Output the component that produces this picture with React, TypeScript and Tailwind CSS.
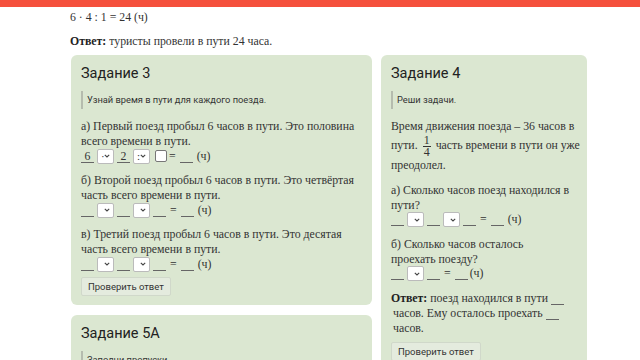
import React from 'react';

const serif = { fontFamily: '"Liberation Serif", "DejaVu Serif", serif' };

const Blank = ({ children, w = 'w-[13px]' }: { children?: React.ReactNode; w?: string }) => (
  <span className={`inline-block ${w} border-b border-[#666] text-center leading-[12px] align-baseline`}>
    {children ?? '\u00a0'}
  </span>
);

const Select = ({ value }: { value?: string }) => (
  <span className="inline-flex items-center justify-end w-[17px] h-[15px] mx-[3px] border border-[#bbb] bg-white rounded-[2px] align-middle relative">
    {value && <span className="absolute left-[3px] top-[-1px] text-[11px]">{value}</span>}
    <svg width="6" height="4" viewBox="0 0 6 4" className="mr-[3px]">
      <path d="M0.8 0.8 L3 3 L5.2 0.8" stroke="#444" strokeWidth="1.1" fill="none" />
    </svg>
  </span>
);

const Hint = ({ children }: { children: React.ReactNode }) => (
  <div className="border-l-2 border-[#b5bcae] pl-[4px] py-[4px] mt-[7px] text-[9.3px] leading-[10px] text-[#333] font-['Roboto',sans-serif]">
    {children}
  </div>
);

const Button = () => (
  <button className="mt-[6px] px-[6px] h-[19px] text-[9.5px] text-[#333] bg-[#e4ebde] border border-[#d0d8ca] rounded-[2px] font-['Roboto',sans-serif]">
    Проверить ответ
  </button>
);

const Card = ({ title, children }: { title: string; children: React.ReactNode }) => (
  <div className="bg-[#dbe7d1] rounded-[6px] px-[10px] pt-[9px] pb-[9px]">
    <h3 className="text-[14.5px] text-[#222] leading-[20px] font-['Roboto',sans-serif]">{title}</h3>
    {children}
  </div>
);

const Eq = ({ children }: { children: React.ReactNode }) => (
  <div className="flex items-center h-[14px]">{children}</div>
);

export default function App() {
  return (
    <div className="w-[640px] h-[360px] overflow-hidden bg-white text-[#333]" style={serif}>
      <div className="h-[7px] bg-[#f5503c]" />
      <div className="pl-[70px] pt-[3px] text-[11.8px] leading-[15px]">
        <p>6 · 4 : 1 = 24 (ч)</p>
        <p className="mt-[9px]"><b className="text-[#222]">Ответ:</b> туристы провели в пути 24 часа.</p>
      </div>
      <div className="flex gap-[9px] pl-[71px] mt-[6px] items-start text-[11.8px] leading-[15px]">
        <div className="w-[301px] flex flex-col gap-[10px]">
          <Card title="Задание 3">
            <Hint>Узнай время в пути для каждого поезда.</Hint>
            <p className="mt-[10px]">а) Первый поезд пробыл 6 часов в пути. Это половина всего времени в пути.</p>
            <Eq>
              <Blank>6</Blank><Select value="·" /><Blank>2</Blank><Select value=":" />
              <span className="inline-block w-[12px] h-[12px] border border-[#777] bg-white rounded-[2px] ml-[2px] mr-[2px]" />
              <span>=</span><span className="ml-[4px]"><Blank /></span><span className="ml-[4px]">(ч)</span>
            </Eq>
            <p className="mt-[10px]">б) Второй поезд пробыл 6 часов в пути. Это четвёртая часть всего времени в пути.</p>
            <Eq>
              <Blank /><Select /><Blank /><Select /><Blank /><span className="ml-[4px]">=</span><span className="ml-[4px]"><Blank /></span><span className="ml-[4px]">(ч)</span>
            </Eq>
            <p className="mt-[10px]">в) Третий поезд пробыл 6 часов в пути. Это десятая часть всего времени в пути.</p>
            <Eq>
              <Blank /><Select /><Blank /><Select /><Blank /><span className="ml-[4px]">=</span><span className="ml-[4px]"><Blank /></span><span className="ml-[4px]">(ч)</span>
            </Eq>
            <Button />
          </Card>
          <Card title="Задание 5А">
            <Hint>Заполни пропуски.</Hint>
            <p className="mt-[10px]">Ответ</p>
          </Card>
        </div>
        <div className="w-[206px]">
          <Card title="Задание 4">
            <Hint>Реши задачи.</Hint>
            <p className="mt-[10px]">Время движения поезда – 36 часов в</p>
            <p className="whitespace-nowrap leading-[24px] mt-[-1px]">
              пути.
              <span className="inline-flex flex-col items-center mx-[5px] text-[12px] leading-[11px] align-middle">
                <span className="px-[1px]">1</span>
                <span className="w-[8px] border-t border-[#333]" />
                <span>4</span>
              </span>
              часть времени в пути он уже
            </p>
            <p>преодолел.</p>
            <p className="mt-[10px]">а) Сколько часов поезд находился в пути?</p>
            <Eq>
              <Blank /><Select /><Blank /><Select /><Blank /><span className="ml-[4px]">=</span><span className="ml-[4px]"><Blank /></span><span className="ml-[4px]">(ч)</span>
            </Eq>
            <p className="mt-[10px]">б) Сколько часов осталось<br />проехать поезду?</p>
            <Eq>
              <Blank /><Select /><Blank /><span className="ml-[4px]">=</span><span className="ml-[4px]"><Blank /></span><span className="ml-[2px]">(ч)</span>
            </Eq>
            <p className="mt-[10px]"><b className="text-[#222]">Ответ:</b> поезд находился в пути <Blank /></p>
            <p className="pl-[2px]">часов. Ему осталось проехать <Blank /></p>
            <p className="pl-[2px]">часов.</p>
            <Button />
          </Card>
        </div>
      </div>
    </div>
  );
}
